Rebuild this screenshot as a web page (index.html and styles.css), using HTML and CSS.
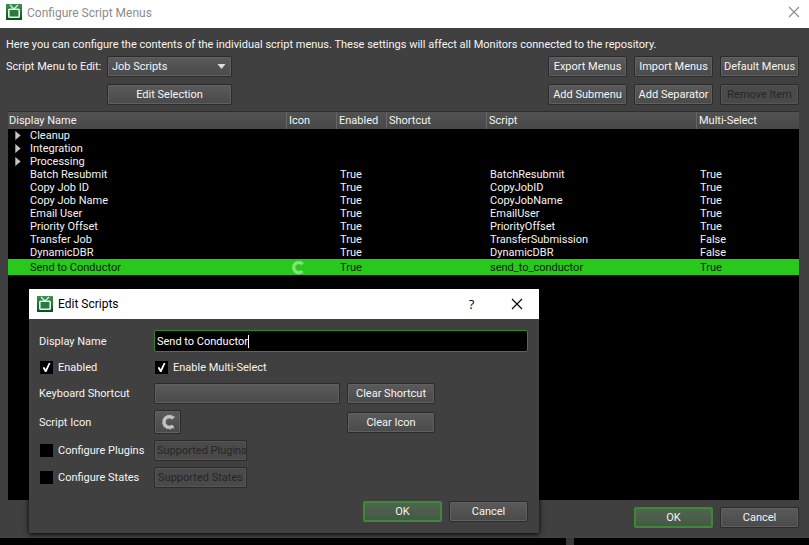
FILE: index.html
```html
<!DOCTYPE html>
<html lang="en">
<head>
<meta charset="utf-8">
<title>Configure Script Menus</title>
<link rel="stylesheet" href="styles.css">
</head>
<body>
<svg width="0" height="0" class="defs" aria-hidden="true">
  <defs>
    <linearGradient id="tv-bg" x1="0" y1="0" x2="0" y2="1">
      <stop offset="0" stop-color="#3f9154"/><stop offset="1" stop-color="#0b4f20"/>
    </linearGradient>
    <symbol id="tv" viewBox="0 0 16 16">
      <rect width="16" height="16" fill="url(#tv-bg)"/>
      <path d="M4 1 8 5l4-4" fill="none" stroke="#d8f0dc" stroke-width="1.3"/>
      <rect x="2.8" y="5.3" width="10.4" height="8" rx=".8" fill="#2c7a41" stroke="#e4f4e6" stroke-width="1.6"/>
    </symbol>
    <symbol id="conductor" viewBox="0 0 16 16">
      <path d="M13.2 4.2A5.4 5.4 0 1 0 13.2 11.8" fill="none" stroke="currentColor" stroke-width="3.2"/>
      <path d="M13.6 4.6A5.4 5.4 0 1 0 13.2 12.3" fill="none" stroke="currentColor" stroke-width="5" stroke-dasharray="1 1.6" opacity=".5"/>
    </symbol>
    <symbol id="close" viewBox="0 0 12 12">
      <path d="M1 1l10 10M11 1L1 11" fill="none" stroke="currentColor" stroke-width="1.1"/>
    </symbol>
    <symbol id="expand" viewBox="0 0 6 10"><path d="M0 0l6 5-6 5z" fill="#c4c4c4"/></symbol>
  </defs>
</svg>

<div class="window">
  <header class="titlebar titlebar-inactive">
    <svg class="app-icon"><use href="#tv"/></svg>
    <h1 class="title">Configure Script Menus</h1>
    <button class="caption-button" aria-label="Close"><svg><use href="#close"/></svg></button>
  </header>
  <main class="content">
    <p class="intro">Here you can configure the contents of the individual script menus. These settings will affect all Monitors connected to the repository.</p>
    <div class="toolbar">
      <div class="picker">
        <label for="menu">Script Menu to Edit:</label>
        <div class="select-wrap">
          <select id="menu" class="control"><option>Job Scripts</option></select>
          <svg class="select-arrow" viewBox="0 0 8 5"><path d="M0 0h8L4 5z" fill="#ddd"/></svg>
        </div>
        <button class="control edit-selection">Edit Selection</button>
      </div>
      <div class="actions">
        <button class="control">Export Menus</button>
        <button class="control">Import Menus</button>
        <button class="control">Default Menus</button>
        <button class="control">Add Submenu</button>
        <button class="control">Add Separator</button>
        <button class="control" disabled>Remove Item</button>
      </div>
    </div>
    <div class="list">
      <table>
        <colgroup><col class="c-name"><col class="c-icon"><col class="c-enabled"><col class="c-shortcut"><col class="c-script"><col></colgroup>
        <thead><tr><th>Display Name</th><th>Icon</th><th>Enabled</th><th>Shortcut</th><th>Script</th><th>Multi-Select</th></tr></thead>
        <tbody>
          <tr><td class="folder"><svg class="expander"><use href="#expand"/></svg>Cleanup</td><td></td><td></td><td></td><td></td><td></td></tr>
          <tr><td class="folder"><svg class="expander"><use href="#expand"/></svg>Integration</td><td></td><td></td><td></td><td></td><td></td></tr>
          <tr><td class="folder"><svg class="expander"><use href="#expand"/></svg>Processing</td><td></td><td></td><td></td><td></td><td></td></tr>
          <tr><td>Batch Resubmit</td><td></td><td>True</td><td></td><td>BatchResubmit</td><td>True</td></tr>
          <tr><td>Copy Job ID</td><td></td><td>True</td><td></td><td>CopyJobID</td><td>True</td></tr>
          <tr><td>Copy Job Name</td><td></td><td>True</td><td></td><td>CopyJobName</td><td>True</td></tr>
          <tr><td>Email User</td><td></td><td>True</td><td></td><td>EmailUser</td><td>True</td></tr>
          <tr><td>Priority Offset</td><td></td><td>True</td><td></td><td>PriorityOffset</td><td>True</td></tr>
          <tr><td>Transfer Job</td><td></td><td>True</td><td></td><td>TransferSubmission</td><td>False</td></tr>
          <tr><td>DynamicDBR</td><td></td><td>True</td><td></td><td>DynamicDBR</td><td>False</td></tr>
          <tr class="selected"><td>Send to Conductor</td><td><svg class="row-icon"><use href="#conductor"/></svg></td><td>True</td><td></td><td>send_to_conductor</td><td>True</td></tr>
        </tbody>
      </table>
    </div>
    <div class="footer">
      <button class="control primary">OK</button>
      <button class="control">Cancel</button>
    </div>
  </main>
</div>
<div class="backdrop"><span class="splitter"></span></div>

<section class="dialog" role="dialog" aria-labelledby="dialog-title">
  <header class="titlebar">
    <svg class="app-icon"><use href="#tv"/></svg>
    <h2 class="title" id="dialog-title">Edit Scripts</h2>
    <button class="caption-button" aria-label="Help"><span class="help">?</span></button>
    <button class="caption-button" aria-label="Close"><svg><use href="#close"/></svg></button>
  </header>
  <form class="dialog-body">
    <div class="form-grid">
      <label for="name">Display Name</label>
      <div class="name-field"><input id="name" type="text" value="Send to Conductor"><span class="caret"></span></div>

      <label class="check"><input type="checkbox" checked>Enabled</label>
      <label class="check span"><input type="checkbox" checked>Enable Multi-Select</label>

      <label for="shortcut">Keyboard Shortcut</label>
      <button type="button" id="shortcut" class="control"></button>
      <button type="button" class="control">Clear Shortcut</button>

      <label for="icon">Script Icon</label>
      <button type="button" id="icon" class="control icon-button"><svg><use href="#conductor"/></svg></button>
      <button type="button" class="control">Clear Icon</button>

      <label class="check"><input type="checkbox">Configure Plugins</label>
      <button type="button" class="control supported" disabled>Supported Plugins</button>

      <label class="check"><input type="checkbox">Configure States</label>
      <button type="button" class="control supported" disabled>Supported States</button>
    </div>
    <div class="footer">
      <button type="button" class="control primary">OK</button>
      <button type="button" class="control">Cancel</button>
    </div>
  </form>
</section>
</body>
</html>
```
FILE: styles.css
```css
* { box-sizing: border-box; }

body {
  margin: 0;
  min-height: 100vh;
  display: flex;
  flex-direction: column;
  position: relative;
  background: #000;
  color: #f4f4f4;
  font: 11px/13px Roboto, sans-serif;
}

.defs { position: absolute; }

.window {
  flex: 1;
  display: flex;
  flex-direction: column;
  background: #404040;
}

/* Title bars */
.titlebar {
  display: flex;
  align-items: center;
  height: 30px;
  padding-left: 8px;
  background: #fff;
  color: #000;
}
.titlebar-inactive { height: 28px; padding-left: 6px; color: #8c8c8c; }
.app-icon { width: 16px; height: 16px; }
.titlebar-inactive .app-icon { margin-bottom: 4px; }
.title {
  flex: 1;
  margin: 0 0 0 5px;
  font: 12px/16px Roboto, sans-serif;
}
.titlebar-inactive .title { margin-bottom: 2px; }
.caption-button {
  display: flex;
  align-items: center;
  justify-content: center;
  width: 45px;
  height: 28px;
  padding: 0;
  border: 0;
  background: none;
  color: inherit;
}
.titlebar-inactive .caption-button { width: 31px; height: 24px; margin-bottom: 4px; }
.caption-button svg { width: 12px; height: 12px; }
.help { font: 13px/16px "Open Sans", sans-serif; }

/* Controls */
.control {
  height: 21px;
  padding: 0 2px;
  border: 1px solid #2b2b2b;
  border-radius: 2px;
  background: linear-gradient(#5a5a5a, #4a4a4a);
  box-shadow: inset 0 0 0 1px #606060;
  color: #f4f4f4;
  font: inherit;
  white-space: nowrap;
}
.control:disabled { background: #4a4a4a; box-shadow: inset 0 0 0 1px #555; color: #262626; }
.primary {
  border: 2px solid #3a8a38;
  background: linear-gradient(#506450, #465846);
  box-shadow: none;
}

/* Main content */
.content {
  flex: 1;
  display: flex;
  flex-direction: column;
  padding: 10px 10px 10px 8px;
}
.intro { margin: 0 0 5px -2px; white-space: nowrap; }
.toolbar {
  display: flex;
  justify-content: space-between;
  margin: 0 0 6px -2px;
}
.picker {
  display: grid;
  grid-template-columns: 101px 125px;
  gap: 7px 0;
  align-items: center;
  white-space: nowrap;
}
.select-wrap { position: relative; display: flex; }
.select-wrap select { flex: 1; appearance: none; padding: 0 4px; }
.select-arrow { position: absolute; right: 6px; top: 8px; width: 9px; height: 5px; pointer-events: none; }
.edit-selection { grid-column: 2; }
.actions { display: grid; grid-template-columns: repeat(3, 79px); gap: 7px; }

/* Script list */
.list { flex: 1; background: #000; border-top: 1px solid #2e2e2e; }
table { width: 100%; border-collapse: separate; border-spacing: 0; table-layout: fixed; }
.c-name { width: 279px; }
.c-icon, .c-enabled { width: 50px; }
.c-shortcut { width: 100px; }
.c-script { width: 210px; }
th {
  height: 17px;
  padding: 0 2px;
  border-right: 1px solid #666;
  background: linear-gradient(#525252, #484848);
  font-weight: 400;
  text-align: left;
}
th:first-child { padding-left: 1px; }
th:last-child { border-right: 0; }
td { height: 13px; padding: 0 3px; white-space: nowrap; }
td:first-child { padding-left: 22px; }
td.folder { padding-left: 7px; }
.expander { width: 6px; height: 9px; margin-right: 9px; vertical-align: -1px; }
.selected td { height: 16px; background: #28c81c; color: #061f04; }
.row-icon { display: block; width: 15px; height: 15px; color: #86e47c; }

.footer { display: flex; justify-content: flex-end; gap: 7px; margin-top: 7px; }
.footer .control { width: 79px; }

.backdrop { height: 7px; display: flex; }
.splitter { width: 8px; margin-left: 70%; background: #383838; }

/* Edit dialog */
.dialog {
  position: absolute;
  left: 29px;
  top: 289px;
  width: 510px;
  background: #404040;
  box-shadow: 0 1px 5px #000;
}
.dialog-body { padding: 11px 11px 11px 10px; }
.form-grid {
  display: grid;
  grid-template-columns: 115px 186px 7px 88px 1fr;
  grid-template-rows: 22px 19px 21px 24px 21px 21px;
  row-gap: 6px;
  align-items: center;
}
.form-grid > label:not(.span) { grid-column: 1; }
.form-grid > .control { grid-column: 4; }
.form-grid > #shortcut, .form-grid > #icon, .form-grid > .supported { grid-column: 2; }
.form-grid > .name-field, .form-grid > .span { grid-column: 2 / -1; }
.name-field { position: relative; display: flex; }
.name-field input {
  flex: 1;
  height: 22px;
  padding: 0 2px;
  border: 1px solid #2a8a26;
  border-radius: 2px;
  background: #000;
  color: #fff;
  font: inherit;
  outline: 0;
}
.caret { position: absolute; left: 94px; top: 5px; width: 1px; height: 13px; background: #fff; }
.icon-button { width: 27px; height: 24px; padding: 0; display: flex; align-items: center; justify-content: center; color: #c4c4c4; }
.icon-button svg { width: 16px; height: 16px; }
.supported { justify-self: start; width: 93px; }
.check { display: flex; align-items: center; gap: 5px; }
.check input {
  appearance: none;
  width: 13px;
  height: 13px;
  margin: 0 0 0 1px;
  background: #000;
  display: grid;
  place-items: center;
}
.check input:checked::before {
  content: "";
  width: 8px;
  height: 9px;
  background: #fff;
  clip-path: polygon(0 50%, 22% 44%, 40% 70%, 78% 0, 100% 0, 50% 100%, 32% 100%);
}
.dialog .footer { margin-top: 13px; }
```
